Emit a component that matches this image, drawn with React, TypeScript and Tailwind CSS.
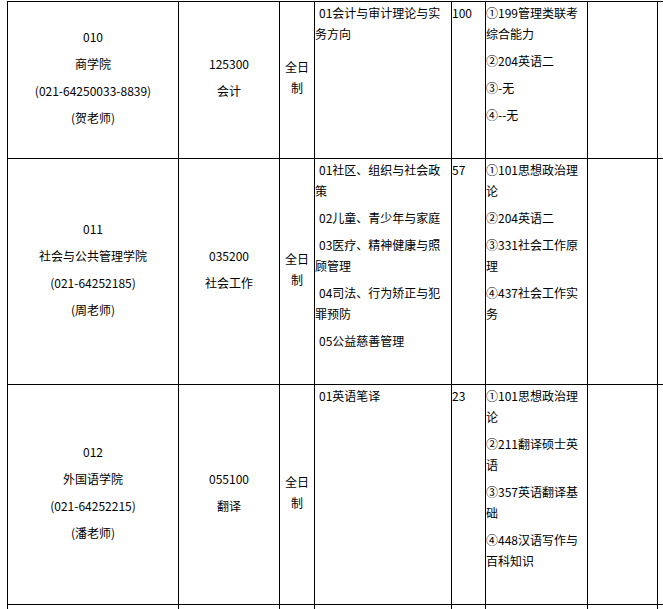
import React from "react";

type Para = string[]; // lines (explicit breaks)

const P = ({ lines, indent }: { lines: Para; indent?: boolean }) => (
  <p className={`mb-[6px] whitespace-nowrap ${indent ? "indent-[4px]" : ""}`}>
    {lines.map((l, i) => (
      <React.Fragment key={i}>
        {i > 0 && <br />}
        {l}
      </React.Fragment>
    ))}
  </p>
);

const Center = ({ paras }: { paras: Para[] }) => (
  <div className="flex flex-col items-center justify-center overflow-hidden border-r border-b border-black text-center">
    <div>
      {paras.map((p, i) => (
        <P key={i} lines={p} />
      ))}
    </div>
  </div>
);

const Top = ({ paras, indent }: { paras: Para[]; indent?: boolean }) => (
  <div className="overflow-hidden border-r border-b border-black text-left">
    {paras.map((p, i) => (
      <P key={i} lines={p} indent={indent} />
    ))}
  </div>
);

const Empty = () => <div className="border-r border-b border-black" />;

type Row = {
  c1: Para[];
  c2: Para[];
  c4: Para[];
  c5: string;
  c6: Para[];
};

const rows: Row[] = [
  {
    c1: [["010"], ["商学院"], ["(021-64250033-8839)"], ["(贺老师)"]],
    c2: [["125300"], ["会计"]],
    c4: [["01会计与审计理论与实", "务方向"]],
    c5: "100",
    c6: [["①199管理类联考", "综合能力"], ["②204英语二"], ["③-无"], ["④--无"]],
  },
  {
    c1: [["011"], ["社会与公共管理学院"], ["(021-64252185)"], ["(周老师)"]],
    c2: [["035200"], ["社会工作"]],
    c4: [
      ["01社区、组织与社会政", "策"],
      ["02儿童、青少年与家庭"],
      ["03医疗、精神健康与照", "顾管理"],
      ["04司法、行为矫正与犯", "罪预防"],
      ["05公益慈善管理"],
    ],
    c5: "57",
    c6: [
      ["①101思想政治理", "论"],
      ["②204英语二"],
      ["③331社会工作原", "理"],
      ["④437社会工作实", "务"],
    ],
  },
  {
    c1: [["012"], ["外国语学院"], ["(021-64252215)"], ["(潘老师)"]],
    c2: [["055100"], ["翻译"]],
    c4: [["01英语笔译"]],
    c5: "23",
    c6: [
      ["①101思想政治理", "论"],
      ["②211翻译硕士英", "语"],
      ["③357英语翻译基", "础"],
      ["④448汉语写作与", "百科知识"],
    ],
  },
];

export default function App() {
  return (
    <div className="h-[609px] w-[663px] overflow-hidden bg-white pt-px pl-[7px] font-['Microsoft_YaHei','Noto_Sans_CJK_SC',sans-serif] text-[12px] leading-[21px] text-black">
      <div className="grid w-max grid-cols-[171px_101px_35px_137px_34px_102px_70px_120px] grid-rows-[157px_226px_220px_100px] border-t border-l border-black">
        {rows.map((r, i) => (
          <React.Fragment key={i}>
            <Center paras={r.c1} />
            <Center paras={r.c2} />
            <Center paras={[["全日", "制"]]} />
            <Top paras={r.c4} indent />
            <Top paras={[[r.c5]]} />
            <Top paras={r.c6} />
            <Empty />
            <Empty />
          </React.Fragment>
        ))}
        {Array.from({ length: 8 }).map((_, i) => (
          <Empty key={`e${i}`} />
        ))}
      </div>
    </div>
  );
}
